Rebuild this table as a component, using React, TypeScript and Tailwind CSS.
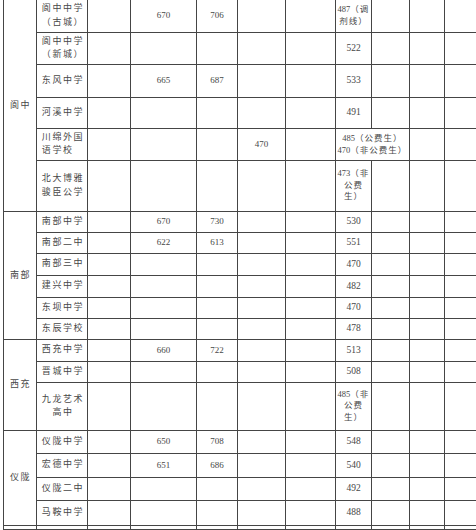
import { Fragment, type ReactNode } from "react";

type Row = {
  h: string;
  group?: { label: string; span: number };
  name: string[];
  left?: boolean;
  a?: string;
  b?: string;
  c6?: string;
  score?: string[];
  wide?: string[];
};

const rows: Row[] = [
  { h: "h-[32px]", group: { label: "阆中", span: 6 }, name: ["阆中中学", "（古城）"], a: "670", b: "706", score: ["487（调", "剂线）"] },
  { h: "h-[32px]", name: ["阆中中学", "（新城）"], score: ["522"] },
  { h: "h-[33px]", name: ["东风中学"], a: "665", b: "687", score: ["533"] },
  { h: "h-[31px]", name: ["河溪中学"], score: ["491"] },
  { h: "h-[32px]", name: ["川绵外国", "语学校"], left: true, c6: "470", wide: ["485（公费生）", "470（非公费生）"] },
  { h: "h-[51px]", name: ["北大博雅", "骏臣公学"], score: ["473（非", "公费", "生）"] },
  { h: "h-[21px]", group: { label: "南部", span: 6 }, name: ["南部中学"], a: "670", b: "730", score: ["530"] },
  { h: "h-[21px]", name: ["南部二中"], a: "622", b: "613", score: ["551"] },
  { h: "h-[22px]", name: ["南部三中"], score: ["470"] },
  { h: "h-[22px]", name: ["建兴中学"], score: ["482"] },
  { h: "h-[21px]", name: ["东坝中学"], score: ["470"] },
  { h: "h-[21px]", name: ["东辰学校"], score: ["478"] },
  { h: "h-[22px]", group: { label: "西充", span: 3 }, name: ["西充中学"], a: "660", b: "722", score: ["513"] },
  { h: "h-[21px]", name: ["晋城中学"], score: ["508"] },
  { h: "h-[48px]", name: ["九龙艺术", "高中"], score: ["485（非", "公费", "生）"] },
  { h: "h-[23px]", group: { label: "仪陇", span: 4 }, name: ["仪陇中学"], a: "650", b: "708", score: ["548"] },
  { h: "h-[24px]", name: ["宏德中学"], a: "651", b: "686", score: ["540"] },
  { h: "h-[23px]", name: ["仪陇二中"], score: ["492"] },
  { h: "h-[25px]", name: ["马鞍中学"], score: ["488"] },
];

const cell = "border border-[#454545] p-0 text-center align-middle text-[9px] leading-[11px]";

// digits stay tight, Chinese gets a bit of tracking like the scan
function Mixed({ text }: { text: string }) {
  return (
    <>
      {text
        .split(/(\d+)/)
        .filter(Boolean)
        .map((part, i) =>
          /\d/.test(part) ? (
            <span key={i}>{part}</span>
          ) : (
            <span key={i} className="tracking-[1px]">
              {part}
            </span>
          )
        )}
    </>
  );
}

function Lines({ lines, className }: { lines: string[]; className?: string }): ReactNode {
  return (
    <div className={className}>
      {lines.map((l) => (
        <div key={l}>
          <Mixed text={l} />
        </div>
      ))}
    </div>
  );
}

export default function App() {
  const widths = ["w-[33px]", "w-[51px]", "w-[43px]", "w-[66px]", "w-[41px]", "w-[48px]", "w-[50px]", "w-[36px]", "w-[38px]", "w-[35px]", "w-[32px]"];

  return (
    <div className="w-[476px] h-[530px] overflow-hidden bg-white pl-[3px] font-[Liberation_Serif,Noto_Sans_CJK_SC,serif] text-[#474747]">
      <table className="table-fixed border-collapse w-[473px]">
        <colgroup>
          {widths.map((w, i) => (
            <col key={i} className={w} />
          ))}
        </colgroup>
        <tbody>
          {rows.map((r, i) => {
            const top = i === 0 ? "border-t-0" : "";
            return (
              <tr key={i} className={r.h}>
                {r.group && (
                  <td rowSpan={r.group.span} className={`${cell} ${top}`}>
                    <span className="tracking-[1.5px] pl-[1px]">{r.group.label}</span>
                  </td>
                )}
                <td className={`${cell} ${top}`}>
                  <div
                    className={`${r.left ? "inline-block text-left" : ""} leading-[13.5px] tracking-[1.6px] pl-[2px]`}
                  >
                    {r.name.map((n) => (
                      <div key={n}>{n}</div>
                    ))}
                  </div>
                </td>
                <td className={`${cell} ${top}`} />
                <td className={`${cell} ${top} text-[9.5px]`}>{r.a}</td>
                <td className={`${cell} ${top} text-[9.5px]`}>{r.b}</td>
                <td className={`${cell} ${top} text-[9.5px]`}>{r.c6}</td>
                <td className={`${cell} ${top}`} />
                {r.wide ? (
                  <td colSpan={2} className={cell}>
                    <Lines lines={r.wide} className="text-[8.5px] leading-[12px]" />
                  </td>
                ) : (
                  <Fragment>
                    <td className={`${cell} ${top}`}>
                      {r.score && r.score.length > 1 ? (
                        <Lines lines={r.score} className="text-[8.5px] leading-[11.5px]" />
                      ) : (
                        <span className="text-[9.5px]">{r.score?.[0]}</span>
                      )}
                    </td>
                    <td className={`${cell} ${top}`} />
                  </Fragment>
                )}
                <td className={`${cell} ${top}`} />
                <td className={`${cell} ${top}`} />
              </tr>
            );
          })}
          <tr className="h-[4px]">
            {widths.map((w) => (
              <td key={w} className={`${cell} leading-[0px]`} />
            ))}
          </tr>
          <tr className="h-[12px]">
            {widths.map((w) => (
              <td key={w} className={cell} />
            ))}
          </tr>
        </tbody>
      </table>
    </div>
  );
}
